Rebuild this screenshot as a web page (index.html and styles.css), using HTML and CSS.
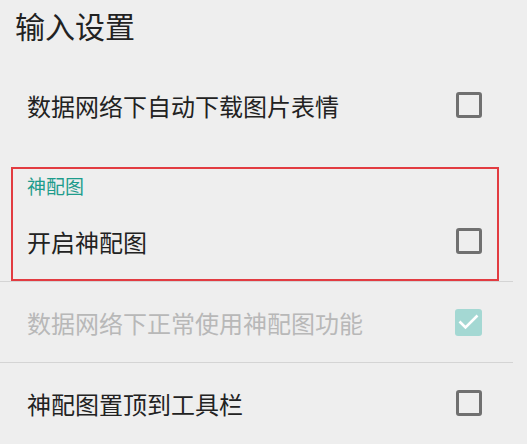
FILE: index.html
```html
<!DOCTYPE html>
<html>
<head>
    <meta charset="UTF-8">
    <title>输入设置</title>
    <link rel="stylesheet" href="styles.css">
</head>
<body>
    <h1 class="header">输入设置</h1>
    <div class="list">
        <div class="row">
            <span class="row-title">数据网络下自动下载图片表情</span>
            <span class="checkbox"></span>
        </div>
        <div class="group">
            <div class="category">神配图</div>
            <div class="row">
                <span class="row-title">开启神配图</span>
                <span class="checkbox"></span>
            </div>
        </div>
        <div class="divider"></div>
        <div class="row disabled">
            <span class="row-title">数据网络下正常使用神配图功能</span>
            <span class="checkbox checked">
                <svg width="27" height="27" viewBox="0 0 27 27">
                    <path d="M4.5 12.5 L10.5 18.5 L22.5 6.5" fill="none" stroke="#fff" stroke-width="2.6"/>
                </svg>
            </span>
        </div>
        <div class="divider"></div>
        <div class="row">
            <span class="row-title">神配图置顶到工具栏</span>
            <span class="checkbox"></span>
        </div>
    </div>
</body>
</html>
```

FILE: styles.css
```css
body {
    margin: 0;
    background-color: #eeeeee;
    font-family: "Noto Sans CJK SC", "Noto Sans", sans-serif;
    color: #222222;
}
.header {
    margin: 0;
    height: 65px;
    line-height: 50px;
    padding-left: 15px;
    font-size: 30px;
    font-weight: normal;
    box-sizing: border-box;
}
.list {
    margin-right: 14px;
}
.row {
    height: 80px;
    display: flex;
    align-items: center;
    justify-content: space-between;
    padding: 0 31px 0 27px;
}
.row-title {
    font-size: 24px;
}
.group {
    margin: 22px 14px 0 11px;
    outline: 2px solid #e23b41;
    outline-offset: -2px;
}
.group .row {
    padding: 0 17px 0 16px;
}
.category {
    height: 34px;
    line-height: 34px;
    padding: 2px 0 0 16px;
    box-sizing: border-box;
    font-size: 19px;
    color: #1e9c8c;
}
.divider {
    height: 1px;
    background-color: #d4d4d4;
}
.checkbox {
    width: 26px;
    height: 26px;
    box-sizing: border-box;
    border: 3px solid #707070;
    border-radius: 3px;
    display: flex;
    align-items: center;
    justify-content: center;
}
.checkbox.checked {
    width: 27px;
    height: 27px;
    border: none;
    background-color: #a4d8d3;
}
.disabled .row-title {
    color: #b8b8b8;
}
```
